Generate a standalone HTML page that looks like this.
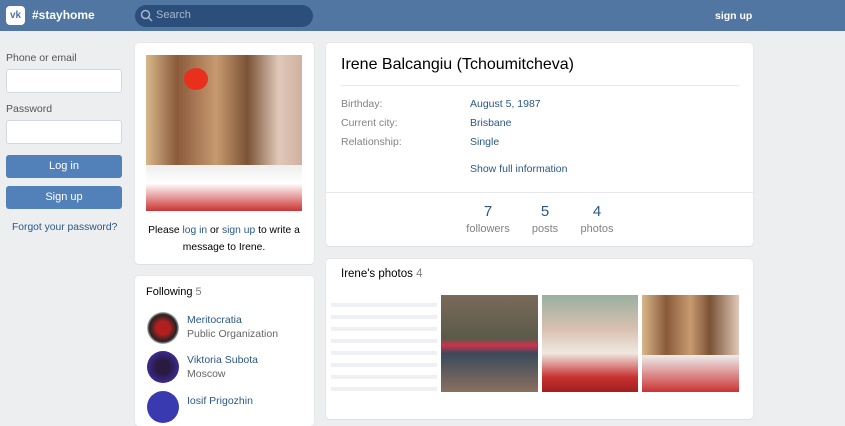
<!DOCTYPE html>
<html><head><meta charset="utf-8"><style>
*{box-sizing:border-box;margin:0;padding:0}
body{width:845px;height:409px;overflow:hidden;background:#edeef0;font-family:"Liberation Sans",sans-serif;font-size:11px;color:#000;position:relative}
.a{position:absolute}
.hdr{left:0;top:0;width:845px;height:31px;background:#5076a1}
.card{background:#fff;border-radius:4px;box-shadow:0 1px 0 #dce1e6,0 0 0 1px #e7e8ec}
.in{background:#fff;border:1px solid #d3d9de;border-radius:3px;width:116px;height:24px;left:6px}
.btn{background:#5181b8;color:#fff;border-radius:3px;width:116px;height:23px;left:6px;text-align:center;line-height:23px;font-size:11px}
.lbl{color:#656565;font-size:10.5px}
.lnk{color:#2a5885}
.gray{color:#828282}
.av{width:32px;height:32px;border-radius:50%;left:147px}
</style></head><body>
<div class="a hdr"></div>
<div class="a" style="left:6px;top:6px;width:19px;height:19px;background:#fff;border-radius:4px;color:#5076a1;font-weight:bold;font-size:10px;text-align:center;line-height:19px">vk</div>
<div class="a" style="left:32px;top:8px;color:#fff;font-weight:bold;font-size:12px">#stayhome</div>
<div class="a" style="left:135px;top:5px;width:178px;height:22px;background:#2b4f7a;border-radius:11px"></div>
<svg class="a" style="left:140px;top:9px" width="13" height="13" viewBox="0 0 13 13"><circle cx="5.5" cy="5.5" r="4" fill="none" stroke="#a6b7cc" stroke-width="1.5"/><line x1="8.5" y1="8.5" x2="12" y2="12" stroke="#a6b7cc" stroke-width="1.5"/></svg>
<div class="a" style="left:156px;top:9px;color:#a6b7cc;font-size:11px">Search</div>
<div class="a" style="left:715px;top:10px;color:#fff;font-weight:bold;font-size:10.5px">sign up</div>

<div class="a lbl" style="left:6px;top:52px;color:#555">Phone or email</div>
<div class="a in" style="top:69px"></div>
<div class="a lbl" style="left:6px;top:103px;color:#555">Password</div>
<div class="a in" style="top:120px"></div>
<div class="a btn" style="top:155px">Log in</div>
<div class="a btn" style="top:186px">Sign up</div>
<div class="a lnk" style="left:12px;top:222px;font-size:10.3px">Forgot your password?</div>

<div class="a card" style="left:135px;top:43px;width:179px;height:221px"></div>
<div class="a" style="left:146px;top:55px;width:156px;height:156px;background:linear-gradient(90deg,#d8b88a 0%,#8a5a3a 20%,#c89a70 45%,#7a5236 65%,#e0c8b8 85%,#d0b0a0 100%)"></div>
<div class="a" style="left:146px;top:165px;width:156px;height:46px;background:linear-gradient(180deg,#eee 0%,#fff 40%,#c33 100%)"></div>
<div class="a" style="left:184px;top:68px;width:24px;height:22px;border-radius:50%;background:#e8301c"></div>
<div class="a" style="left:144px;top:222px;width:160px;text-align:center;font-size:10.3px;line-height:17px;color:#000">Please <span class="lnk">log in</span> or <span class="lnk">sign up</span> to write a message to Irene.</div>

<div class="a card" style="left:135px;top:276px;width:179px;height:150px"></div>
<div class="a" style="left:146px;top:286px;font-size:11px">Following <span class="gray">5</span></div>
<div class="a av" style="top:312px;background:radial-gradient(circle,#b02020 30%,#222 60%,#fff 75%)"></div>
<div class="a lnk" style="left:187px;top:314px;font-size:10.5px">Meritocratia</div>
<div class="a" style="left:187px;top:328px;font-size:10.5px;color:#656565">Public Organization</div>
<div class="a av" style="top:351px;background:radial-gradient(circle,#2a1a40 30%,#3a2a90 70%)"></div>
<div class="a lnk" style="left:187px;top:354px;font-size:10.5px">Viktoria Subota</div>
<div class="a" style="left:187px;top:368px;font-size:10.5px;color:#656565">Moscow</div>
<div class="a av" style="top:391px;background:#3a3ab0"></div>
<div class="a lnk" style="left:187px;top:395px;font-size:10.5px">Iosif Prigozhin</div>

<div class="a card" style="left:326px;top:43px;width:427px;height:203px"></div>
<div class="a" style="left:341px;top:56px;font-size:16px;color:#000">Irene Balcangiu (Tchoumitcheva)</div>
<div class="a" style="left:341px;top:85px;width:398px;height:1px;background:#e7e8ec"></div>
<div class="a lbl" style="left:341px;top:98px;color:#828282">Birthday:</div>
<div class="a lnk" style="left:470px;top:98px;font-size:10.5px">August 5, 1987</div>
<div class="a lbl" style="left:341px;top:117px;color:#828282">Current city:</div>
<div class="a lnk" style="left:470px;top:117px;font-size:10.5px">Brisbane</div>
<div class="a lbl" style="left:341px;top:136px;color:#828282">Relationship:</div>
<div class="a lnk" style="left:470px;top:136px;font-size:10.5px">Single</div>
<div class="a lnk" style="left:470px;top:163px;font-size:10.5px">Show full information</div>
<div class="a" style="left:326px;top:192px;width:427px;height:1px;background:#e7e8ec"></div>
<div class="a lnk" style="left:458px;top:203px;width:60px;text-align:center;font-size:15px">7</div>
<div class="a gray" style="left:458px;top:223px;width:60px;text-align:center;font-size:11px">followers</div>
<div class="a lnk" style="left:515px;top:203px;width:60px;text-align:center;font-size:15px">5</div>
<div class="a gray" style="left:515px;top:223px;width:60px;text-align:center;font-size:11px">posts</div>
<div class="a lnk" style="left:567px;top:203px;width:60px;text-align:center;font-size:15px">4</div>
<div class="a gray" style="left:567px;top:223px;width:60px;text-align:center;font-size:11px">photos</div>

<div class="a card" style="left:326px;top:259px;width:427px;height:160px"></div>
<div class="a" style="left:341px;top:268px;font-size:11.5px">Irene's photos <span class="gray">4</span></div>
<div class="a" style="left:331px;top:295px;width:106px;height:97px;background:repeating-linear-gradient(180deg,#fff 0,#fff 8px,#eef0f3 8px,#eef0f3 12px)"></div>
<div class="a" style="left:441px;top:295px;width:97px;height:97px;background:linear-gradient(180deg,#7a6a5a 0%,#5a5a4a 45%,#d0304a 52%,#3a4a5a 60%,#8a7060 100%)"></div>
<div class="a" style="left:542px;top:295px;width:96px;height:97px;background:linear-gradient(180deg,#9ab0a0 0%,#d8c0b0 35%,#f0e8e0 60%,#c83030 85%,#a02020 100%)"></div>
<div class="a" style="left:642px;top:295px;width:97px;height:97px;background:linear-gradient(90deg,#d8b88a 0%,#8a5a3a 25%,#c89a70 50%,#7a5236 70%,#e0c8b8 100%)"></div>
<div class="a" style="left:642px;top:355px;width:97px;height:37px;background:linear-gradient(180deg,#eee,#c33)"></div>
</body></html>
